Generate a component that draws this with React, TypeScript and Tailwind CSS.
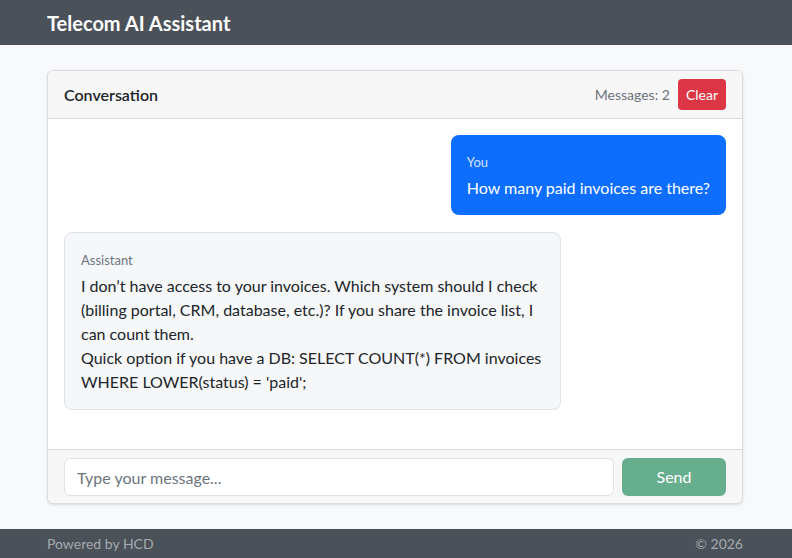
const messages = [
  { role: "user", label: "You", text: "How many paid invoices are there?" },
  {
    role: "assistant",
    label: "Assistant",
    text: "I don\u2019t have access to your invoices. Which system should I check (billing portal, CRM, database, etc.)? If you share the invoice list, I can count them.\nQuick option if you have a DB: SELECT COUNT(*) FROM invoices WHERE LOWER(status) = 'paid';",
  },
];

const App = () => {
  return (
    <div className="min-h-screen flex flex-col bg-[#f8f9fa] text-[#212529] font-['Segoe_UI','Lato','Noto_Sans',sans-serif]">
      <nav className="bg-[#4b5159] h-[45px] flex items-center">
        <div className="w-[696px] ml-[47px]">
          <h1 className="text-white text-[20px] font-bold">Telecom AI Assistant</h1>
        </div>
      </nav>

      <main className="flex-1 pt-[25px]">
        <div className="w-[696px] ml-[47px] border border-[#dadcdf] rounded-md bg-white shadow-sm overflow-hidden">
          <div className="h-[48px] flex items-center justify-between px-4 bg-[#f7f7f7] border-b border-[#d6d8db]">
            <h2 className="text-[16px] font-semibold">Conversation</h2>
            <div className="flex items-center gap-2">
              <span className="text-[14px] text-[#6c757d]">Messages: 2</span>
              <button className="bg-[#dc3545] text-white text-[14px] rounded px-2 h-[31px]">Clear</button>
            </div>
          </div>

          <div className="h-[330px] px-4 pt-4 flex flex-col gap-[17px]">
            {messages.map((m, i) =>
              m.role === "user" ? (
                <div key={i} className="flex justify-end">
                  <div className="bg-[#0d6efd] text-white rounded-lg px-4 pt-[17px] pb-[15px] max-w-[75%]">
                    <div className="text-[13px] text-white/80 leading-5 mb-[4px]">{m.label}</div>
                    <div className="text-[16px] leading-6">{m.text}</div>
                  </div>
                </div>
              ) : (
                <div key={i} className="flex justify-start">
                  <div className="bg-[#f6f7f9] border border-[#dee2e6] rounded-lg px-4 pt-[17px] pb-[15px] max-w-[75%]">
                    <div className="text-[13px] text-[#6c757d] leading-5 mb-[4px]">{m.label}</div>
                    <div className="text-[16px] leading-6 whitespace-pre-line">{m.text}</div>
                  </div>
                </div>
              )
            )}
          </div>

          <div className="bg-[#f7f7f7] border-t border-[#d6d8db] px-4 pt-2 pb-[7px] flex gap-2">
            <input
              className="flex-1 h-[38px] bg-white border border-[#dee2e6] rounded-md px-3 text-[16px] placeholder:text-[#6c757d] outline-none"
              placeholder="Type your message..."
            />
            <button className="w-[104px] h-[38px] rounded-md bg-[#67ae8f] text-white text-[16px]">Send</button>
          </div>
        </div>
      </main>

      <footer className="bg-[#4b5159] h-[29px] flex items-center">
        <div className="w-[696px] ml-[47px] flex justify-between text-[14px] text-[#a5aab0]">
          <span>Powered by HCD</span>
          <span>© 2026</span>
        </div>
      </footer>
    </div>
  );
};

export default App;
